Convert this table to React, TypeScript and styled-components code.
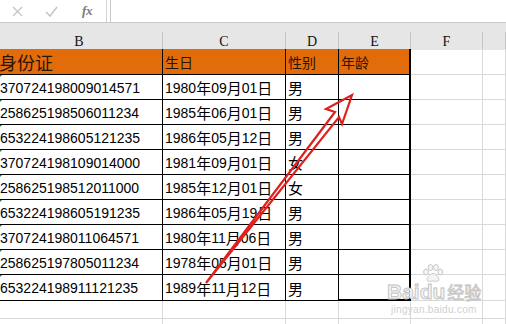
import React from 'react';
import styled, { createGlobalStyle } from 'styled-components';

const GlobalStyle = createGlobalStyle`
  html, body {
    margin: 0;
    padding: 0;
    background: #ffffff;
  }
  body {
    font-family: "Liberation Sans", "Noto Sans CJK SC", sans-serif;
    color: #000;
  }
`;

// column widths B..G, each includes its right gridline
const COLUMNS = '167px 123px 53px 72px 72px 1fr';

const Sheet = styled.div`
  position: relative;
  width: 506px;
  height: 324px;
  overflow: hidden;
  background: #fff;
`;

const FormulaBar = styled.div`
  display: flex;
  height: 22px;
  border-bottom: 1px solid #c9c9c9;
`;

const EditButtons = styled.div`
  display: flex;
  align-items: center;
  width: 106px;
  border-right: 1px solid #d4d4d4;
`;

const EditButton = styled.span<{ $w: number }>`
  display: flex;
  justify-content: center;
  align-items: center;
  width: ${(p) => p.$w}px;
  height: 100%;
`;

const FxLabel = styled.span`
  font-family: "Liberation Serif", serif;
  font-style: italic;
  font-weight: bold;
  font-size: 13px;
  color: #7a7a7a;
  letter-spacing: -0.5px;
`;

const FormulaInput = styled.div`
  flex: 1;
  margin-left: 3px;
  border-left: 1px solid #c9c9c9;
`;

const Band = styled.div`
  height: 9px;
  background: #e6e6e6;
`;

const Row = styled.div<{ $h: number }>`
  display: grid;
  grid-template-columns: ${COLUMNS};
  height: ${(p) => p.$h}px;
  margin-left: -4px;
`;

const HeadCell = styled.div`
  display: flex;
  justify-content: center;
  align-items: center;
  background: #e6e6e6;
  border-right: 1px solid #c4c4c4;
  font-family: "Liberation Serif", serif;
  font-size: 14px;
  color: #111;
  padding-top: 2px;
  box-sizing: border-box;
`;

const Cell = styled.div<{ $boxed?: boolean; $head?: boolean; $pad?: number }>`
  position: relative;
  display: flex;
  align-items: center;
  box-sizing: border-box;
  padding-left: ${(p) => p.$pad ?? 2}px;
  padding-top: 1px;
  white-space: nowrap;
  overflow: hidden;
  font-size: 14px;
  background: ${(p) => (p.$head ? '#e36c0a' : 'transparent')};
  color: ${(p) => (p.$head ? '#2b1404' : '#000')};
  border-right: 1px solid ${(p) => (p.$boxed ? '#000' : '#d9d9d9')};
  border-bottom: 1px solid ${(p) => (p.$boxed ? '#000' : '#d9d9d9')};
`;

const EdgeCell = styled(Cell)<{ $last?: boolean }>`
  border-right-width: 2px;
  border-bottom-width: ${(p) => (p.$last ? 2 : 1)}px;
`;

const Han = styled.span<{ $size?: number }>`
  font-family: "Noto Sans CJK SC", sans-serif;
  font-size: ${(p) => p.$size ?? 15}px;
`;

// green "number stored as text" flag
const TextFlag = styled.span`
  position: absolute;
  left: 1px;
  top: 0;
  width: 0;
  height: 0;
  border-top: 5px solid #1e8a3a;
  border-right: 5px solid transparent;
`;

const Overlay = styled.svg`
  position: absolute;
  left: 0;
  top: 0;
  pointer-events: none;
`;

const Watermark = styled.div`
  position: absolute;
  left: 387px;
  top: 264px;
  display: flex;
  flex-direction: column;
  align-items: flex-start;
  pointer-events: none;
`;

const MarkLine = styled.div`
  display: flex;
  align-items: flex-end;
`;

const MarkWord = styled.span`
  font-family: "Liberation Sans", sans-serif;
  font-size: 21px;
  font-weight: bold;
  color: #f4f4f4;
  -webkit-text-stroke: 0.9px #c2c2c2;
  line-height: 20px;
`;

const MarkHan = styled.span`
  font-family: "Noto Sans CJK SC", sans-serif;
  font-size: 17px;
  color: #f4f4f4;
  -webkit-text-stroke: 0.8px #c2c2c2;
  margin-left: 2px;
  line-height: 20px;
`;

const PawWrap = styled.span`
  display: flex;
  flex-direction: column;
  align-items: center;
`;

const MarkUrl = styled.div`
  font-family: "Liberation Sans", sans-serif;
  font-size: 10px;
  color: #d0d0d0;
  margin-left: 4px;
  margin-top: 2px;
  letter-spacing: 0.3px;
`;

const people = [
  ['370724198009014571', '1980年09月01日', '男'],
  ['258625198506011234', '1985年06月01日', '男'],
  ['653224198605121235', '1986年05月12日', '男'],
  ['370724198109014000', '1981年09月01日', '女'],
  ['258625198512011000', '1985年12月01日', '女'],
  ['653224198605191235', '1986年05月19日', '男'],
  ['370724198011064571', '1980年11月06日', '男'],
  ['258625197805011234', '1978年05月01日', '男'],
  ['653224198911121235', '1989年11月12日', '男'],
];

// digits use the latin face, chinese characters get the CJK face
const mixed = (text: string) =>
  text.split(/([\u4e00-\u9fff]+)/).map((part, i) =>
    /[\u4e00-\u9fff]/.test(part) ? <Han key={i}>{part}</Han> : part
  );

const Paw = () => (
  <svg width="22" height="18" viewBox="0 0 22 18">
    <g fill="#f4f4f4" stroke="#c2c2c2" strokeWidth="0.9">
      <ellipse cx="4" cy="8" rx="2.4" ry="3" />
      <ellipse cx="8.5" cy="3.5" rx="2.4" ry="3" />
      <ellipse cx="14" cy="3.5" rx="2.4" ry="3" />
      <ellipse cx="18.3" cy="8" rx="2.4" ry="3" />
      <path d="M11 9.5c3 0 6 4 6 6s-2 2-6 1.5c-4 0.5-6 0.5-6-1.5s3-6 6-6z" />
    </g>
  </svg>
);

const App = () => {
  const cols = ['B', 'C', 'D', 'E', 'F', ''];

  return (
    <>
      <GlobalStyle />
      <Sheet>
        <FormulaBar>
          <EditButtons>
            <EditButton $w={34}>
              <svg width="11" height="11" viewBox="0 0 11 11">
                <path d="M1 1l9 9M10 1l-9 9" stroke="#c4c4c4" strokeWidth="1.3" />
              </svg>
            </EditButton>
            <EditButton $w={34}>
              <svg width="13" height="11" viewBox="0 0 13 11">
                <path d="M1 6l4 4 7-9" stroke="#c4c4c4" strokeWidth="1.5" fill="none" />
              </svg>
            </EditButton>
            <EditButton $w={38}>
              <FxLabel>fx</FxLabel>
            </EditButton>
          </EditButtons>
          <FormulaInput />
        </FormulaBar>
        <Band />

        <Row $h={17}>
          {cols.map((c, i) => (
            <HeadCell key={i}>{c}</HeadCell>
          ))}
        </Row>

        <Row $h={26}>
          <Cell $boxed $head $pad={3}>
            <Han $size={18}>身份证</Han>
          </Cell>
          <Cell $boxed $head>
            <Han $size={14}>生日</Han>
          </Cell>
          <Cell $boxed $head>
            <Han $size={14}>性别</Han>
          </Cell>
          <EdgeCell $boxed $head>
            <Han $size={14}>年龄</Han>
          </EdgeCell>
          <Cell />
          <Cell />
        </Row>

        {people.map(([id, birth, sex], idx) => {
          const last = idx === people.length - 1;
          return (
            <Row $h={last ? 26 : 25} key={id}>
              <Cell $boxed $pad={4}>
                <TextFlag />
                {id}
              </Cell>
              <Cell $boxed>{mixed(birth)}</Cell>
              <Cell $boxed>
                <Han>{sex}</Han>
              </Cell>
              <EdgeCell $boxed $last={last} />
              <Cell />
              <Cell />
            </Row>
          );
        })}

        <Row $h={18}>
          {cols.map((c, i) => (
            <Cell key={i} />
          ))}
        </Row>
        <Row $h={18}>
          {cols.map((c, i) => (
            <Cell key={i} />
          ))}
        </Row>

        <Overlay width="506" height="324" viewBox="0 0 506 324">
          <path
            d="M206 283 L335 112 L326 109 L352 95 L342 124 L339 117 Z"
            fill="none"
            stroke="#e0201c"
            strokeWidth="2.2"
            strokeLinejoin="miter"
          />
        </Overlay>

        <Watermark>
          <MarkLine>
            <MarkWord>Bai</MarkWord>
            <PawWrap>
              <Paw />
              <MarkWord>du</MarkWord>
            </PawWrap>
            <MarkHan>经验</MarkHan>
          </MarkLine>
          <MarkUrl>jingyan.baidu.com</MarkUrl>
        </Watermark>
      </Sheet>
    </>
  );
};

export default App;
